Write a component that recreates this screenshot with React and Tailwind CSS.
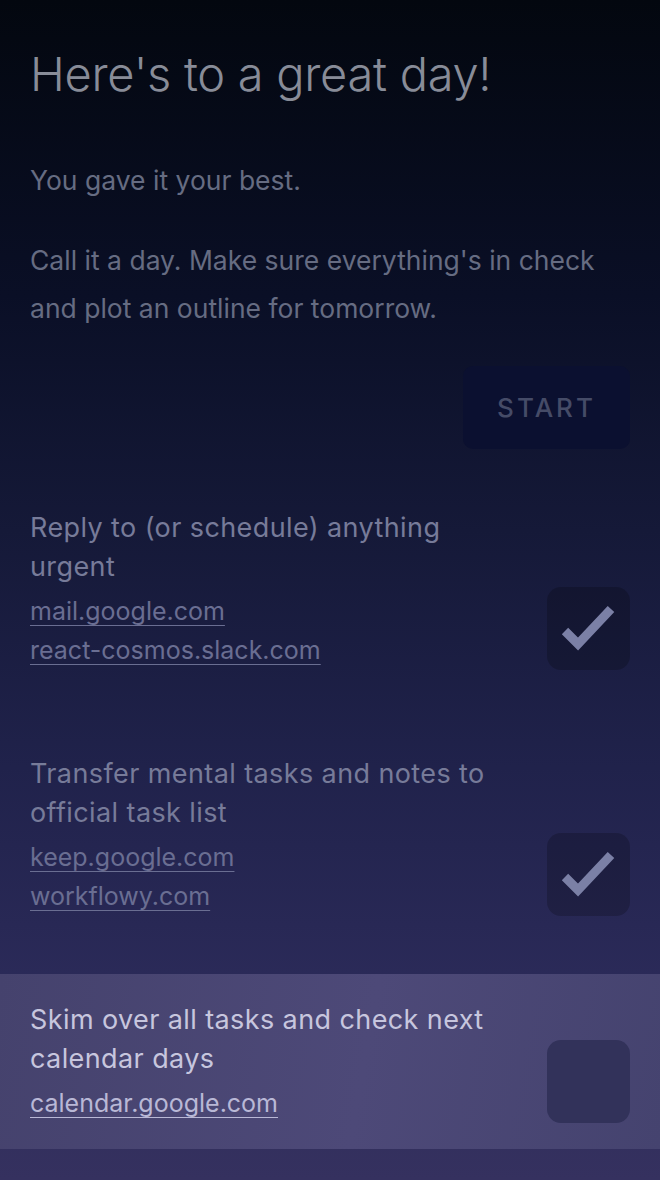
import React from "react";

const tasks = [
  {
    title: "Reply to (or schedule) anything urgent",
    links: ["mail.google.com", "react-cosmos.slack.com"],
    done: true,
  },
  {
    title: "Transfer mental tasks and notes to official task list",
    links: ["keep.google.com", "workflowy.com"],
    done: true,
  },
  {
    title: "Skim over all tasks and check next calendar days",
    links: ["calendar.google.com"],
    done: false,
    active: true,
  },
];

function Check() {
  return (
    <svg width="83" height="83" viewBox="0 0 83 83">
      <polyline
        points="18,44 31,57 64,22"
        fill="none"
        stroke="#7b80a6"
        strokeWidth="9"
        strokeLinejoin="miter"
      />
    </svg>
  );
}

function TaskRow({ task }) {
  return (
    <div
      className={`flex items-end justify-between pl-[30px] pr-[30px] pt-[26px] pb-[26px] ${
        task.active ? "bg-[linear-gradient(100deg,#45426d,#4d4978_55%,#45436f)]" : ""
      }`}
    >
      <div className="w-[475px]">
        <div
          className={`text-[27px] leading-[39px] tracking-[0.4px] ${
            task.active ? "text-[#c7c6de]" : "text-[#777b99]"
          }`}
        >
          {task.title}
        </div>
        <div className="mt-[6px]">
          {task.links.map((l) => (
            <div key={l}>
              <a
                className={`text-[25px] leading-[39px] underline underline-offset-[5px] decoration-1 ${
                  task.active ? "text-[#b9b8d6]" : "text-[#6a6e92]"
                }`}
              >
                {l}
              </a>
            </div>
          ))}
        </div>
      </div>
      <div
        className={`w-[83px] h-[83px] rounded-[14px] shrink-0 ${
          task.active ? "bg-[#32325a]" : "bg-black/20"
        }`}
      >
        {task.done && <Check />}
      </div>
    </div>
  );
}

export default function App() {
  return (
    <div
      className="min-h-[1180px] w-full bg-[linear-gradient(180deg,#03070f_0%,#0a0f26_25%,#151938_45%,#20224b_65%,#2c2b5a_85%,#35315f_100%)]"
      style={{ fontFamily: "Inter, Roboto, 'Noto Sans', sans-serif" }}
    >
      <div className="pt-[42px] px-[30px]">
        <h1 className="text-[47px] leading-[64px] font-light tracking-[-0.3px] text-[#888c98]">
          Here's to a great day!
        </h1>
        <p className="mt-[50px] text-[26.5px] leading-[48px] text-[#666c82]">
          You gave it your best.
        </p>
        <p className="mt-[32px] text-[26.5px] leading-[48px] text-[#666c82]">
          Call it a day. Make sure everything's in check and plot an outline for tomorrow.
        </p>
        <div className="flex justify-end mt-[34px]">
          <button className="w-[167px] h-[83px] rounded-[10px] bg-[#0b1030] text-[26px] tracking-[3px] text-[#454b67] font-medium">
            START
          </button>
        </div>
      </div>
      <div className="mt-[33px] flex flex-col gap-[32px]">
        {tasks.map((t) => (
          <TaskRow key={t.title} task={t} />
        ))}
      </div>
    </div>
  );
}
